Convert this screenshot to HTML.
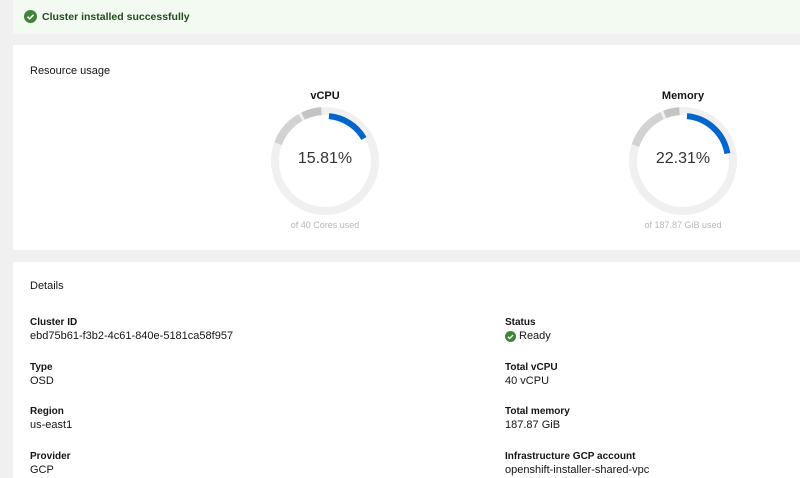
<!DOCTYPE html>
<html><head><style>
*{margin:0;padding:0;box-sizing:border-box}
body{width:800px;height:478px;background:#f0f0f0;font-family:"Liberation Sans",sans-serif;color:#151515;position:relative;overflow:hidden}
.a{position:absolute}
.alert{left:13px;top:0;width:787px;height:34px;background:#f3faf2}
.card{background:#fff;left:13px;width:787px}
.t{font-size:11px;white-space:nowrap}
.l{font-size:10px;font-weight:bold;white-space:nowrap}
.v{font-size:11px;white-space:nowrap}
</style></head><body>
<div class="a alert"></div>
<svg class="a" style="left:24px;top:10px" width="13" height="13" viewBox="0 0 16 16"><circle cx="8" cy="8" r="8" fill="#3e8635"/><path d="M4.3 8.3l2.5 2.5 4.9-4.9" stroke="#fff" stroke-width="2" fill="none"/></svg>
<div class="a t" style="left:42px;top:11px;font-size:10.5px;font-weight:bold;color:#1e4f18">Cluster installed successfully</div>

<div class="a card" style="top:45px;height:205px"></div>
<div class="a t" style="left:30px;top:65px;font-size:11px">Resource usage</div>

<div class="a" style="left:275px;top:90px;width:100px;text-align:center;font-size:11px;font-weight:bold">vCPU</div>
<svg class="a" style="left:270px;top:106px" width="110" height="110" viewBox="0 0 110 110">
<g transform="rotate(-90 55 55)" fill="none">
<circle cx="55" cy="55" r="50" stroke="#f0f0f0" stroke-width="8"/>
<circle cx="55" cy="55" r="50" stroke="#d2d2d2" stroke-width="8" stroke-dasharray="35 400" stroke-dashoffset="-253"/>
<circle cx="55" cy="55" r="50" stroke="#c4c4c4" stroke-width="8" stroke-dasharray="19 400" stroke-dashoffset="-291"/>
<circle cx="55" cy="55" r="45" stroke="#0066cc" stroke-width="6" stroke-dasharray="43 400" stroke-dashoffset="-4"/>
</g></svg>
<div class="a" style="left:275px;top:150px;width:100px;text-align:center;font-size:16px;color:#333">15.81%</div>
<div class="a" style="left:265px;top:220px;width:120px;text-align:center;font-size:9px;color:#b8b8b8">of 40 Cores used</div>

<div class="a" style="left:633px;top:90px;width:100px;text-align:center;font-size:11px;font-weight:bold">Memory</div>
<svg class="a" style="left:628px;top:106px" width="110" height="110" viewBox="0 0 110 110">
<g transform="rotate(-90 55 55)" fill="none">
<circle cx="55" cy="55" r="50" stroke="#f0f0f0" stroke-width="8"/>
<circle cx="55" cy="55" r="50" stroke="#d2d2d2" stroke-width="8" stroke-dasharray="41 400" stroke-dashoffset="-251"/>
<circle cx="55" cy="55" r="50" stroke="#c4c4c4" stroke-width="8" stroke-dasharray="15 400" stroke-dashoffset="-295"/>
<circle cx="55" cy="55" r="45" stroke="#0066cc" stroke-width="6" stroke-dasharray="59 400" stroke-dashoffset="-4"/>
</g></svg>
<div class="a" style="left:633px;top:150px;width:100px;text-align:center;font-size:16px;color:#333">22.31%</div>
<div class="a" style="left:613px;top:220px;width:140px;text-align:center;font-size:9px;color:#b8b8b8">of 187.87 GiB used</div>

<div class="a card" style="top:262px;height:216px"></div>
<div class="a t" style="left:30px;top:280px">Details</div>

<div class="a l" style="left:30px;top:317px">Cluster ID</div>
<div class="a v" style="left:30px;top:330px">ebd75b61-f3b2-4c61-840e-5181ca58f957</div>
<div class="a l" style="left:30px;top:362px">Type</div>
<div class="a v" style="left:30px;top:375px">OSD</div>
<div class="a l" style="left:30px;top:406px">Region</div>
<div class="a v" style="left:30px;top:419px">us-east1</div>
<div class="a l" style="left:30px;top:451px">Provider</div>
<div class="a v" style="left:30px;top:464px">GCP</div>

<div class="a l" style="left:505px;top:317px">Status</div>
<svg class="a" style="left:505px;top:331px" width="11" height="11" viewBox="0 0 16 16"><circle cx="8" cy="8" r="8" fill="#3e8635"/><path d="M4.3 8.3l2.5 2.5 4.9-4.9" stroke="#fff" stroke-width="2" fill="none"/></svg>
<div class="a v" style="left:519px;top:330px">Ready</div>
<div class="a l" style="left:505px;top:362px">Total vCPU</div>
<div class="a v" style="left:505px;top:375px">40 vCPU</div>
<div class="a l" style="left:505px;top:406px">Total memory</div>
<div class="a v" style="left:505px;top:419px">187.87 GiB</div>
<div class="a l" style="left:505px;top:451px">Infrastructure GCP account</div>
<div class="a v" style="left:505px;top:464px">openshift-installer-shared-vpc</div>
</body></html>
